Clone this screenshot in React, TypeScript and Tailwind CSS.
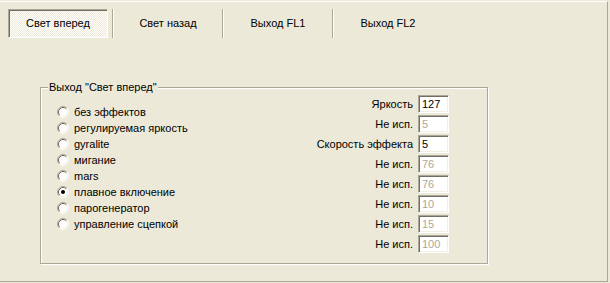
import React from "react";

const tabs = ["Свет вперед", "Свет назад", "Выход FL1", "Выход FL2"];

const modes = [
  "без эффектов",
  "регулируемая яркость",
  "gyralite",
  "мигание",
  "mars",
  "плавное включение",
  "парогенератор",
  "управление сцепкой",
];

const params = [
  { label: "Яркость", value: "127", enabled: true },
  { label: "Не исп.", value: "5", enabled: false },
  { label: "Скорость эффекта", value: "5", enabled: true },
  { label: "Не исп.", value: "76", enabled: false },
  { label: "Не исп.", value: "76", enabled: false },
  { label: "Не исп.", value: "10", enabled: false },
  { label: "Не исп.", value: "15", enabled: false },
  { label: "Не исп.", value: "100", enabled: false },
];

function Radio({ checked }: { checked?: boolean }) {
  return (
    <svg width="12" height="12" viewBox="0 0 12 12" className="shrink-0">
      <circle cx="6" cy="6" r="4.5" fill="#fff" />
      <path d="M2.11 9.89 A5.5 5.5 0 0 1 9.89 2.11" fill="none" stroke="#aca899" strokeWidth="1" />
      <path d="M9.89 2.11 A5.5 5.5 0 0 1 2.11 9.89" fill="none" stroke="#fff" strokeWidth="1" />
      <path d="M2.82 9.18 A4.5 4.5 0 0 1 9.18 2.82" fill="none" stroke="#716f64" strokeWidth="1" />
      <path d="M9.18 2.82 A4.5 4.5 0 0 1 2.82 9.18" fill="none" stroke="#f1efe2" strokeWidth="1" />
      {checked && <circle cx="6" cy="6" r="2" fill="#000" />}
    </svg>
  );
}

export default function App() {
  return (
    <div
      className="w-[610px] h-[283px] bg-[#ece9d8] pt-px text-[11px] text-black"
      style={{ fontFamily: '"Liberation Sans", Arial, sans-serif' }}
    >
      <div className="w-[608px] h-[281px] border-t border-white border-r border-r-[#aca899] border-b border-b-[#aca899]">
        {/* tab strip */}
        <div className="flex items-center mt-[7px] pl-[4px]">
          {tabs.map((t, i) => (
            <React.Fragment key={t}>
              <div className="w-[108px] h-[29px] flex justify-center">
                {i === 0 ? (
                  <div className="w-[100px] h-[29px] flex items-center justify-center border border-t-[#aca899] border-l-[#aca899] border-r-white border-b-white shadow-[inset_1px_1px_0_#716f64] bg-[repeating-conic-gradient(#ffffff_0_25%,#ece9d8_0_50%)] bg-[length:2px_2px]">
                    {t}
                  </div>
                ) : (
                  <div className="flex items-center justify-center">{t}</div>
                )}
              </div>
              {i < 3 && (
                <div className="flex h-[29px]">
                  <div className="w-px bg-[#aca899]" />
                  <div className="w-px bg-white" />
                </div>
              )}
            </React.Fragment>
          ))}
        </div>

        {/* group box */}
        <div className="relative ml-[40px] mt-[49px] w-[448px] h-[177px] border border-[#aca899] shadow-[inset_1px_1px_0_#fff,1px_1px_0_#fff] flex items-start">
          <div className="absolute left-[7px] top-[-8px] px-px leading-[14px] bg-[#ece9d8]">
            Выход "Свет вперед"
          </div>

          <div className="pl-[16px] pt-[16px] flex flex-col">
            {modes.map((m, i) => (
              <div key={m} className="flex items-center gap-[5px] h-[16px]">
                <Radio checked={i === 5} />
                <span className="leading-[14px]">{m}</span>
              </div>
            ))}
          </div>

          <div className="ml-auto pt-[6px] pr-[38px] flex flex-col">
            {params.map((p, i) => (
              <div key={i} className="flex items-center justify-end gap-[5px] h-[20px]">
                <span className="leading-[14px]">{p.label}</span>
                <div
                  className={
                    p.enabled
                      ? "w-[31px] h-[18px] flex items-center pl-[3px] bg-white border border-t-[#aca899] border-l-[#aca899] border-r-white border-b-white shadow-[inset_1px_1px_0_#716f64,inset_-1px_-1px_0_#f1efe2] text-black"
                      : "w-[31px] h-[18px] flex items-center pl-[3px] bg-white border border-t-[#aca899] border-l-[#aca899] border-r-white border-b-white shadow-[inset_1px_1px_0_#716f64,inset_-1px_-1px_0_#f1efe2] text-[#aca899]"
                  }
                >
                  {p.value}
                </div>
              </div>
            ))}
          </div>
        </div>
      </div>
    </div>
  );
}
